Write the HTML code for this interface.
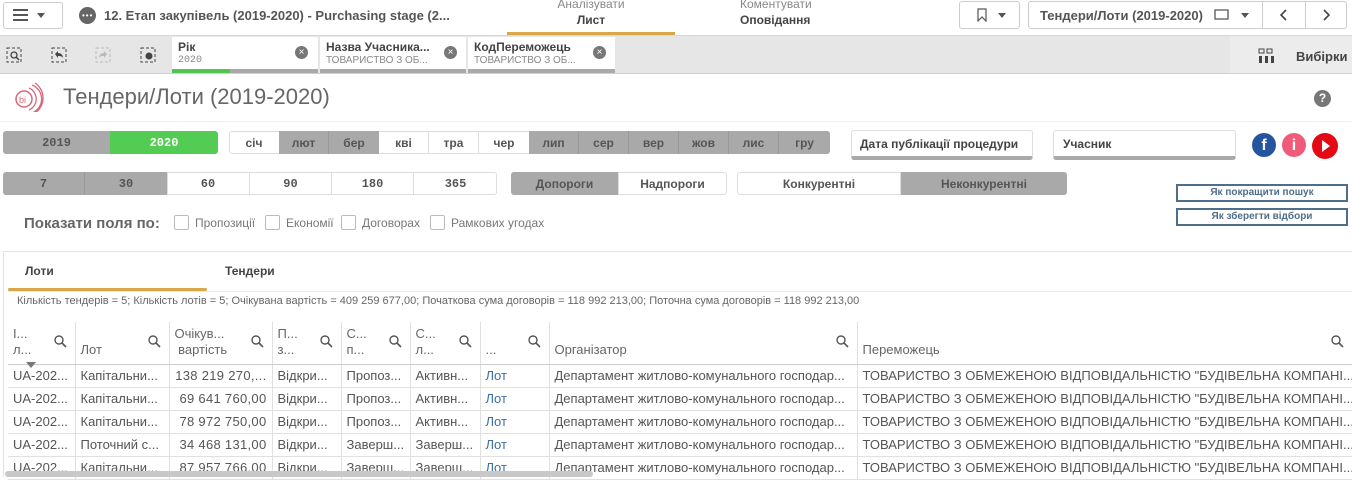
<!DOCTYPE html>
<html><head><meta charset="utf-8"><style>
*{box-sizing:border-box;margin:0;padding:0}
body{width:1352px;height:477px;overflow:hidden;background:#fff;font-family:"Liberation Sans",sans-serif;color:#595959;position:relative}
.a{position:absolute}
.b{font-weight:bold}
.btn{position:absolute;display:flex;align-items:center;justify-content:center;font-size:12px;font-weight:bold;color:#555}
.g{background:#a9a9a9}
.w{background:#fff;border:1px solid #ddd}
.mono{font-family:"Liberation Mono",monospace}
table{border-collapse:collapse;table-layout:fixed;position:absolute;left:8px;top:322px;width:1344px;font-size:13px}
td{border-right:1px solid #e0e0e0;border-bottom:1px solid #e0e0e0;height:23px;padding:0 5px;white-space:nowrap;overflow:hidden;color:#555}
th{border-right:1px solid #e0e0e0;border-bottom:1px solid #ccc;height:42px;font-weight:normal;text-align:left;padding:0 5px;vertical-align:bottom;padding-bottom:6px;position:relative;color:#666;font-size:13px;line-height:16px;white-space:nowrap;overflow:hidden}
th svg{position:absolute;right:8px;top:13px}
.lnk{color:#3d6ea3}
.num{text-align:right;letter-spacing:0.3px}
</style></head><body>
<!-- top bar -->
<div class="a" style="left:0;top:0;width:1352px;height:36px;border-bottom:1px solid #d8d8d8"></div>
<div class="a" style="left:3px;top:2px;width:60px;height:27px;border:1px solid #ccc;border-radius:3px"></div>
<div class="a" style="left:13px;top:9px;width:15px;height:2px;background:#555;box-shadow:0 5px 0 #555,0 10px 0 #555"></div>
<div class="a" style="left:37px;top:13px;width:0;height:0;border-left:4px solid transparent;border-right:4px solid transparent;border-top:5px solid #555"></div>
<div class="a" style="left:79px;top:7px;width:17px;height:17px;border-radius:50%;background:#666"></div>
<div class="a" style="left:82px;top:14px;font-size:8px;color:#fff;letter-spacing:1px;line-height:3px">•••</div>
<div class="a b" style="left:104px;top:8px;font-size:13px;color:#555">12. Етап закупівель (2019-2020) - Purchasing stage (2...</div>
<div class="a" style="left:507px;top:-3px;width:168px;text-align:center;font-size:12px;color:#888">Аналізувати</div>
<div class="a b" style="left:507px;top:13px;width:168px;text-align:center;font-size:12px;color:#444">Лист</div>
<div class="a" style="left:507px;top:32px;width:168px;height:3px;background:#d9a74a"></div>
<div class="a" style="left:740px;top:-3px;font-size:12px;color:#888">Коментувати</div>
<div class="a b" style="left:740px;top:13px;font-size:12px;color:#444">Оповідання</div>
<div class="a" style="left:959px;top:1px;width:61px;height:28px;border:1px solid #ccc;border-radius:3px"></div>
<svg class="a" style="left:977px;top:8px" width="10" height="14"><path d="M1 1h8v12l-4-4-4 4z" fill="none" stroke="#555" stroke-width="1.2"/></svg>
<div class="a" style="left:998px;top:13px;border-left:4px solid transparent;border-right:4px solid transparent;border-top:5px solid #555"></div>
<div class="a" style="left:1028px;top:1px;width:319px;height:28px;border:1px solid #ccc;border-radius:3px"></div>
<div class="a" style="left:1262px;top:1px;width:1px;height:28px;background:#ccc"></div>
<div class="a" style="left:1305px;top:1px;width:1px;height:28px;background:#ccc"></div>
<div class="a b" style="left:1040px;top:8px;font-size:13px;color:#555">Тендери/Лоти (2019-2020)</div>
<svg class="a" style="left:1214px;top:9px" width="16" height="12"><path d="M1 1h13v9H1z M3 10h11" fill="none" stroke="#555" stroke-width="1.3"/></svg>
<div class="a" style="left:1241px;top:13px;border-left:4px solid transparent;border-right:4px solid transparent;border-top:5px solid #555"></div>
<svg class="a" style="left:1280px;top:9px" width="8" height="12"><path d="M6 1L1 6l5 5" fill="none" stroke="#444" stroke-width="1.6"/></svg>
<svg class="a" style="left:1322px;top:9px" width="8" height="12"><path d="M2 1l5 5-5 5" fill="none" stroke="#444" stroke-width="1.6"/></svg>
<!-- toolbar -->
<div class="a" style="left:0;top:36px;width:1352px;height:38px;background:#e6e6e6;border-bottom:1px solid #d0d0d0"></div>
<div class="a" style="left:1230px;top:36px;width:122px;height:37px;background:#ececec"></div>
<svg class="a" style="left:6px;top:47px" width="16" height="16"><rect x="1" y="1" width="14" height="14" fill="none" stroke="#444" stroke-dasharray="3 2"/><circle cx="8" cy="8" r="3" fill="none" stroke="#444" stroke-width="1.3"/><path d="M10 10l3 3" stroke="#444" stroke-width="1.5"/></svg>
<svg class="a" style="left:51px;top:47px" width="16" height="16"><rect x="1" y="1" width="14" height="14" fill="none" stroke="#444" stroke-dasharray="3 2"/><path d="M4 7l3-3v2c3 0 5 2 5 5-1-2-3-2-5-2v2z" fill="#444"/></svg>
<svg class="a" style="left:95px;top:47px" width="16" height="16"><rect x="1" y="1" width="14" height="14" fill="none" stroke="#bbb" stroke-dasharray="3 2"/><path d="M12 7l-3-3v2c-3 0-5 2-5 5 1-2 3-2 5-2v2z" fill="#bbb"/></svg>
<svg class="a" style="left:140px;top:47px" width="16" height="16"><rect x="1" y="1" width="14" height="14" fill="none" stroke="#444" stroke-dasharray="3 2"/><circle cx="9" cy="9" r="3.5" fill="#444"/></svg>
<div class="a" style="left:172px;top:37px;width:146px;height:36px;background:#fff"></div>
<div class="a" style="left:320px;top:37px;width:146px;height:36px;background:#fff"></div>
<div class="a" style="left:468px;top:37px;width:147px;height:36px;background:#fff"></div>
<div class="a" style="left:172px;top:69px;width:146px;height:4px;background:#a9a9a9"></div>
<div class="a" style="left:172px;top:69px;width:58px;height:4px;background:#52c452"></div>
<div class="a" style="left:320px;top:69px;width:146px;height:4px;background:#a9a9a9"></div>
<div class="a" style="left:468px;top:69px;width:147px;height:4px;background:#a9a9a9"></div>
<div class="a b" style="left:178px;top:40px;font-size:12px;color:#444">Рік</div>
<div class="a mono" style="left:178px;top:55px;font-size:10px;color:#888">2020</div>
<div class="a b" style="left:326px;top:40px;font-size:12px;color:#444">Назва Учасника...</div>
<div class="a" style="left:326px;top:55px;font-size:10px;color:#888">ТОВАРИСТВО З ОБ...</div>
<div class="a b" style="left:474px;top:40px;font-size:12px;color:#444">КодПереможець</div>
<div class="a" style="left:474px;top:55px;font-size:10px;color:#888">ТОВАРИСТВО З ОБ...</div>
<div class="a" style="left:295px;top:46px;width:13px;height:13px;border-radius:50%;background:#777;color:#fff;font-size:10px;line-height:13px;text-align:center">×</div>
<div class="a" style="left:444px;top:46px;width:13px;height:13px;border-radius:50%;background:#777;color:#fff;font-size:10px;line-height:13px;text-align:center">×</div>
<div class="a" style="left:593px;top:46px;width:13px;height:13px;border-radius:50%;background:#777;color:#fff;font-size:10px;line-height:13px;text-align:center">×</div>
<svg class="a" style="left:1258px;top:48px" width="18" height="16"><rect x="1" y="1" width="5" height="4" fill="none" stroke="#444"/><rect x="9" y="1" width="5" height="4" fill="none" stroke="#444"/><rect x="1" y="8" width="3" height="7" fill="#444"/><rect x="7" y="8" width="3" height="7" fill="#444"/><rect x="13" y="8" width="3" height="7" fill="#444"/></svg>
<div class="a b" style="left:1296px;top:49px;font-size:13px;color:#444">Вибірки</div>
<!-- title -->
<svg class="a" style="left:10px;top:82px" width="34" height="30"><circle cx="14" cy="17" r="8" fill="none" stroke="#d9677a" stroke-width="1.5"/><path d="M19 6a12 12 0 0 1 0 22M22 3a15 15 0 0 1 0 28M25 1a18 18 0 0 1 0 30" fill="none" stroke="#d9677a" stroke-width="1.3"/><text x="9" y="21" font-size="9" fill="#d9677a" font-family="Liberation Sans">bi</text></svg>
<div class="a" style="left:63px;top:84px;font-size:22px;color:#666;font-family:'Liberation Sans',sans-serif">Тендери/Лоти (2019-2020)</div>
<div class="a" style="left:1314px;top:90px;width:17px;height:17px;border-radius:50%;background:#777;color:#fff;font-size:12px;font-weight:bold;text-align:center;line-height:17px">?</div>
<div class="a" style="left:0;top:121px;width:1352px;height:1px;background:#eee"></div>
<!-- year buttons -->
<div class="btn g mono" style="left:3px;top:131px;width:107px;height:23px;border-radius:3px 0 0 3px">2019</div>
<div class="btn mono" style="left:110px;top:131px;width:108px;height:23px;background:#52cc52;color:#fff;border-radius:0 3px 3px 0">2020</div>
<div class="a" style="left:229px;top:131px;width:601px;height:23px;border:1px solid #ddd;border-radius:3px"></div>
<div class="btn" style="left:229px;top:131px;width:50px;height:23px">січ</div>
<div class="btn g" style="left:279px;top:131px;width:50px;height:23px;border-right:1px solid #999">лют</div>
<div class="btn g" style="left:329px;top:131px;width:50px;height:23px">бер</div>
<div class="btn" style="left:379px;top:131px;width:50px;height:23px;border-right:1px solid #ddd">кві</div>
<div class="btn" style="left:429px;top:131px;width:50px;height:23px;border-right:1px solid #ddd">тра</div>
<div class="btn" style="left:479px;top:131px;width:50px;height:23px">чер</div>
<div class="btn g" style="left:529px;top:131px;width:50px;height:23px;border-right:1px solid #999">лип</div>
<div class="btn g" style="left:579px;top:131px;width:50px;height:23px;border-right:1px solid #999">сер</div>
<div class="btn g" style="left:629px;top:131px;width:50px;height:23px;border-right:1px solid #999">вер</div>
<div class="btn g" style="left:679px;top:131px;width:50px;height:23px;border-right:1px solid #999">жов</div>
<div class="btn g" style="left:729px;top:131px;width:50px;height:23px;border-right:1px solid #999">лис</div>
<div class="btn g" style="left:779px;top:131px;width:51px;height:23px;border-radius:0 3px 3px 0">гру</div>
<div class="a" style="left:851px;top:130px;width:182px;height:30px;border:1px solid #ddd;border-bottom:4px solid #a9a9a9;border-radius:3px"></div>
<div class="a b" style="left:860px;top:137px;font-size:12px;color:#444">Дата публікації процедури</div>
<div class="a" style="left:1053px;top:130px;width:183px;height:30px;border:1px solid #ddd;border-bottom:4px solid #a9a9a9;border-radius:3px"></div>
<div class="a b" style="left:1063px;top:137px;font-size:12px;color:#444">Учасник</div>
<div class="a" style="left:1252px;top:133px;width:24px;height:24px;border-radius:50%;background:#24559e;color:#fff;font-weight:bold;font-size:16px;text-align:center;line-height:25px">f</div>
<div class="a" style="left:1282px;top:133px;width:24px;height:24px;border-radius:50%;background:#ef5b78;color:#fff;font-weight:bold;font-size:16px;text-align:center;line-height:25px">i</div>
<div class="a" style="left:1312px;top:133px;width:26px;height:26px;border-radius:50%;background:#e50914"></div>
<div class="a" style="left:1322px;top:140px;border-top:6px solid transparent;border-bottom:6px solid transparent;border-left:8px solid #fff"></div>
<!-- row 2 -->
<div class="btn g mono" style="left:3px;top:172px;width:82px;height:23px;border-right:1px solid #999;border-radius:3px 0 0 3px">7</div>
<div class="btn g mono" style="left:85px;top:172px;width:82px;height:23px">30</div>
<div class="a" style="left:167px;top:172px;width:330px;height:23px;border:1px solid #ddd;border-radius:0 3px 3px 0"></div>
<div class="btn mono" style="left:167px;top:172px;width:83px;height:23px;border-right:1px solid #ddd">60</div>
<div class="btn mono" style="left:250px;top:172px;width:82px;height:23px;border-right:1px solid #ddd">90</div>
<div class="btn mono" style="left:332px;top:172px;width:82px;height:23px;border-right:1px solid #ddd">180</div>
<div class="btn mono" style="left:414px;top:172px;width:83px;height:23px">365</div>
<div class="btn g" style="left:511px;top:172px;width:107px;height:23px;border-radius:3px 0 0 3px">Допороги</div>
<div class="btn w" style="left:618px;top:172px;width:109px;height:23px;border-radius:0 3px 3px 0">Надпороги</div>
<div class="btn w" style="left:737px;top:172px;width:164px;height:23px;border-radius:3px 0 0 3px">Конкурентні</div>
<div class="btn g" style="left:901px;top:172px;width:166px;height:23px;border-radius:0 3px 3px 0">Неконкурентні</div>
<div class="a b" style="left:1176px;top:184px;width:172px;height:18px;border:2px solid #4e6e8a;font-size:10px;text-align:center;line-height:14px;color:#4e6e8a">Як покращити пошук</div>
<div class="a b" style="left:1176px;top:208px;width:172px;height:18px;border:2px solid #4e6e8a;font-size:10px;text-align:center;line-height:14px;color:#4e6e8a">Як зберегти відбори</div>
<div class="a b" style="left:24px;top:215px;font-size:15px;color:#666">Показати поля по:</div>
<div class="a" style="left:174px;top:215px;width:15px;height:15px;border:1px solid #bbb;border-radius:2px"></div>
<div class="a" style="left:195px;top:216px;font-size:12px;color:#777">Пропозиції</div>
<div class="a" style="left:265px;top:215px;width:15px;height:15px;border:1px solid #bbb;border-radius:2px"></div>
<div class="a" style="left:286px;top:216px;font-size:12px;color:#777">Економії</div>
<div class="a" style="left:341px;top:215px;width:15px;height:15px;border:1px solid #bbb;border-radius:2px"></div>
<div class="a" style="left:362px;top:216px;font-size:12px;color:#777">Договорах</div>
<div class="a" style="left:430px;top:215px;width:15px;height:15px;border:1px solid #bbb;border-radius:2px"></div>
<div class="a" style="left:451px;top:216px;font-size:12px;color:#777">Рамкових угодах</div>
<!-- tabs -->
<div class="a" style="left:3px;top:251px;width:1349px;height:1px;background:#e3e3e3"></div>
<div class="a" style="left:3px;top:251px;width:1px;height:226px;background:#e3e3e3"></div>
<div class="a b" style="left:25px;top:264px;font-size:12px;color:#444">Лоти</div>
<div class="a b" style="left:225px;top:264px;font-size:12px;color:#444">Тендери</div>
<div class="a" style="left:8px;top:288px;width:199px;height:3px;background:#d9a74a;border-radius:2px"></div>
<div class="a" style="left:8px;top:291px;width:1344px;height:1px;background:#e8e8e8"></div>
<div class="a" style="left:17px;top:295px;font-size:11px;color:#666;white-space:nowrap">Кількість тендерів = 5; Кількість лотів = 5; Очікувана вартість = 409 259 677,00; Початкова сума договорів = 118 992 213,00; Поточна сума договорів = 118 992 213,00</div>
<table>
<colgroup><col style="width:67px"><col style="width:94px"><col style="width:103px"><col style="width:69px"><col style="width:69px"><col style="width:70px"><col style="width:69px"><col style="width:308px"><col style="width:495px"></colgroup>
<tr>
<th>І...<br>л...<svg width="13" height="13"><circle cx="5" cy="5" r="4" fill="none" stroke="#555" stroke-width="1.4"/><path d="M8 8l4 4" stroke="#555" stroke-width="1.6"/></svg></th>
<th>Лот<svg width="13" height="13"><circle cx="5" cy="5" r="4" fill="none" stroke="#555" stroke-width="1.4"/><path d="M8 8l4 4" stroke="#555" stroke-width="1.6"/></svg></th>
<th>Очікув...<br>&nbsp;вартість<svg width="13" height="13"><circle cx="5" cy="5" r="4" fill="none" stroke="#555" stroke-width="1.4"/><path d="M8 8l4 4" stroke="#555" stroke-width="1.6"/></svg></th>
<th>П...<br>з...<svg width="13" height="13"><circle cx="5" cy="5" r="4" fill="none" stroke="#555" stroke-width="1.4"/><path d="M8 8l4 4" stroke="#555" stroke-width="1.6"/></svg></th>
<th>С...<br>п...<svg width="13" height="13"><circle cx="5" cy="5" r="4" fill="none" stroke="#555" stroke-width="1.4"/><path d="M8 8l4 4" stroke="#555" stroke-width="1.6"/></svg></th>
<th>С...<br>л...<svg width="13" height="13"><circle cx="5" cy="5" r="4" fill="none" stroke="#555" stroke-width="1.4"/><path d="M8 8l4 4" stroke="#555" stroke-width="1.6"/></svg></th>
<th>...<svg width="13" height="13"><circle cx="5" cy="5" r="4" fill="none" stroke="#555" stroke-width="1.4"/><path d="M8 8l4 4" stroke="#555" stroke-width="1.6"/></svg></th>
<th>Організатор<svg width="13" height="13"><circle cx="5" cy="5" r="4" fill="none" stroke="#555" stroke-width="1.4"/><path d="M8 8l4 4" stroke="#555" stroke-width="1.6"/></svg></th>
<th>Переможець<svg width="13" height="13" style="right:8px"><circle cx="5" cy="5" r="4" fill="none" stroke="#555" stroke-width="1.4"/><path d="M8 8l4 4" stroke="#555" stroke-width="1.6"/></svg></th>
</tr>
<tr><td>UA-202...</td><td>Капітальни...</td><td class="num">138 219 270,...</td><td>Відкри...</td><td>Пропоз...</td><td>Активн...</td><td class="lnk">Лот</td><td>Департамент житлово-комунального господар...</td><td>ТОВАРИСТВО З ОБМЕЖЕНОЮ ВІДПОВІДАЛЬНІСТЮ "БУДІВЕЛЬНА КОМПАНІ...</td></tr>
<tr><td>UA-202...</td><td>Капітальни...</td><td class="num">69 641 760,00</td><td>Відкри...</td><td>Пропоз...</td><td>Активн...</td><td class="lnk">Лот</td><td>Департамент житлово-комунального господар...</td><td>ТОВАРИСТВО З ОБМЕЖЕНОЮ ВІДПОВІДАЛЬНІСТЮ "БУДІВЕЛЬНА КОМПАНІ...</td></tr>
<tr><td>UA-202...</td><td>Капітальни...</td><td class="num">78 972 750,00</td><td>Відкри...</td><td>Пропоз...</td><td>Активн...</td><td class="lnk">Лот</td><td>Департамент житлово-комунального господар...</td><td>ТОВАРИСТВО З ОБМЕЖЕНОЮ ВІДПОВІДАЛЬНІСТЮ "БУДІВЕЛЬНА КОМПАНІ...</td></tr>
<tr><td>UA-202...</td><td>Поточний с...</td><td class="num">34 468 131,00</td><td>Відкри...</td><td>Заверш...</td><td>Заверш...</td><td class="lnk">Лот</td><td>Департамент житлово-комунального господар...</td><td>ТОВАРИСТВО З ОБМЕЖЕНОЮ ВІДПОВІДАЛЬНІСТЮ "БУДІВЕЛЬНА КОМПАНІ...</td></tr>
<tr><td>UA-202...</td><td>Капітальни...</td><td class="num">87 957 766,00</td><td>Відкри...</td><td>Заверш...</td><td>Заверш...</td><td class="lnk">Лот</td><td>Департамент житлово-комунального господар...</td><td>ТОВАРИСТВО З ОБМЕЖЕНОЮ ВІДПОВІДАЛЬНІСТЮ "БУДІВЕЛЬНА КОМПАНІ...</td></tr>
</table>
<div class="a" style="left:26px;top:362px;border-left:5px solid transparent;border-right:5px solid transparent;border-top:6px solid #777"></div>
<div class="a" style="left:5px;top:471px;width:588px;height:6px;background:#c8c8c8;border-radius:3px"></div>
</body></html>
